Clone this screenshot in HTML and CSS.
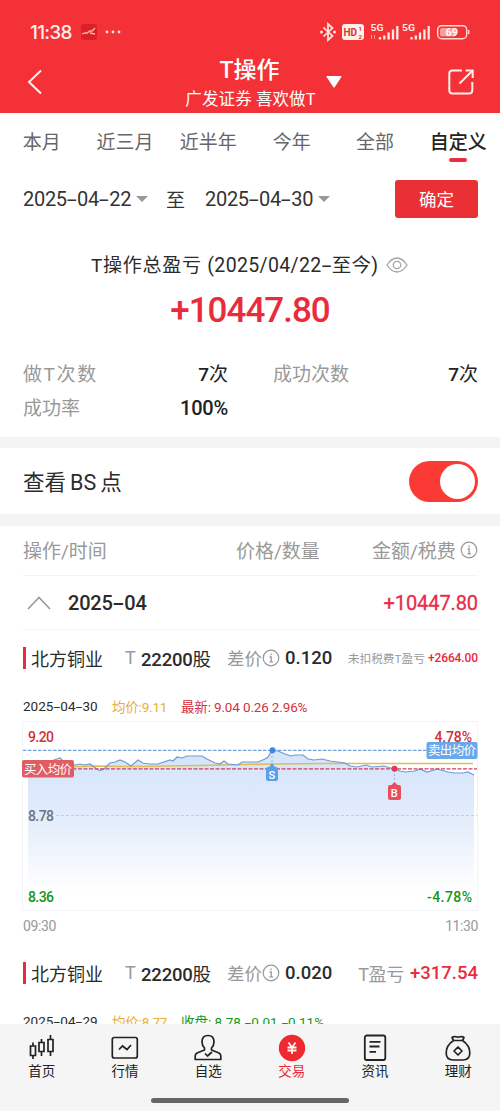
FILE: index.html
```html
<!DOCTYPE html>
<html lang="zh-CN">
<head>
<meta charset="utf-8">
<title>T操作</title>
<link rel="stylesheet" href="styles.css">
</head>
<body>
<svg class="defs" width="0" height="0">
  <symbol id="info" viewBox="0 0 18 18"><circle cx="9" cy="9" r="7.8" fill="none" stroke="#999" stroke-width="1.2"/><path d="M9 4.4v1.8M7.6 8H9.2v4.8M7.4 12.9h3.6" fill="none" stroke="#999" stroke-width="1.3"/></symbol>
</svg>
<header class="header">
  <div class="status">
    <span class="clock">11:38</span>
    <svg class="app" width="16" height="16" viewBox="0 0 16 16"><rect width="16" height="16" rx="3" fill="#dc1f2b"/><path d="M1 10l3-1 2 0 3-2 2 0 3-3M9 9l5 1" fill="none" stroke="#ffb8a8" stroke-width="1.3"/></svg>
    <svg class="dots" width="16" height="4" viewBox="0 0 16 4" fill="#ffe5e0"><circle cx="2" cy="2" r="1.4"/><circle cx="8" cy="2" r="1.4"/><circle cx="14" cy="2" r="1.4"/></svg>
    <svg class="signals" width="152" height="22" viewBox="318 21 152 22">
      <path d="M323.500 27.500l9 8.500-4.500 4V24l4.500 4-9 8.500" fill="none" stroke="#ffe9e4" stroke-width="1.700"/>
      <circle cx="321.500" cy="32" r="1.500" fill="#ffe9e4"/><circle cx="334.500" cy="32" r="1.500" fill="#ffe9e4"/>
      <rect x="342" y="24" width="22" height="16" rx="3" fill="#fff0ec"/>
      <text x="343.500" y="36" class="hd" textLength="13.500">HD</text>
      <text x="358.500" y="31.300" class="tiny">1</text><text x="358.500" y="38.600" class="tiny">2</text>
      <text x="370.500" y="31" class="g5" textLength="13" lengthAdjust="spacingAndGlyphs">5G</text>
      <text x="402" y="31" class="g5" textLength="13" lengthAdjust="spacingAndGlyphs">5G</text>
      <path d="M371.500 35v4M374.500 35v4" stroke="#ff9c96" stroke-width="1"/>
      <path d="M380 37v2.500M384.300 35.500v4M388.600 32.500v7M393 29.500v10M397.300 26v13.500M411.500 37v2.500M415.800 35.500v4M420 32.500v7M424.400 29.500v10M428.700 26v13.500" stroke="#ffe9e4" stroke-width="2.300"/>
      <rect x="437.700" y="25.700" width="29" height="13" rx="4" fill="none" stroke="#ffd9d4" stroke-width="1.500"/>
      <rect x="440" y="28" width="16" height="8.500" rx="2" fill="#ff9993"/>
      <path d="M468.700 30v4" stroke="#ffd9d4" stroke-width="1.500"/>
      <text x="445.500" y="36" class="batt" textLength="12.500">69</text>
    </svg>
  </div>
  <div class="titlebar">
    <svg class="back" width="16" height="26" viewBox="0 0 16 26"><path d="M14 1.500L2 13l12 11.500" fill="none" stroke="#fff0ed" stroke-width="2"/></svg>
    <div class="titles"><h1>T操作</h1><p>广发证券 喜欢做T</p></div>
    <svg class="caret" width="16" height="12" viewBox="0 0 16 12"><path d="M1 0h14q1 0 .4 1L8.800 11q-.8 1-1.600 0L.6 1Q0 0 1 0z" fill="#fff"/></svg>
    <svg class="share" width="26" height="26" viewBox="0 0 26 26"><path d="M14 1.500H4.500Q1.300 1.500 1.300 4.700v16.600q0 3.200 3.200 3.200h16.600q3.200 0 3.200-3.200V13M17.500 1.500h7.200V9M24.200 2L11.500 14.500" fill="none" stroke="#fff0ed" stroke-width="2"/></svg>
  </div>
</header>

<nav class="tabs">
  <span>本月</span><span>近三月</span><span>近半年</span><span>今年</span><span>全部</span><span class="on">自定义</span>
</nav>

<section class="dates">
  <span class="date">2025<i class="h">-</i>04<i class="h">-</i>22</span><i class="tri"></i>
  <span class="to">至</span>
  <span class="date">2025<i class="h">-</i>04<i class="h">-</i>30</span><i class="tri"></i>
  <button class="ok">确定</button>
</section>

<section class="summary">
  <div class="sumtitle"><span>T操作总盈亏 <span class="range">(2025/04/22<i class="h">-</i>至今)</span></span>
    <svg width="22" height="18" viewBox="0 0 22 18" fill="none" stroke="#a4a4a4" stroke-width="1.300"><path d="M1 9C4.500 3.600 7.500 2 11 2s6.500 1.600 10 7c-3.500 5.400-6.500 7-10 7S4.500 14.400 1 9z"/><circle cx="11" cy="9" r="3.700"/></svg>
  </div>
  <div class="total">+10447.80</div>
  <div class="stats">
    <span class="wide">做T次数</span><b>7<em>次</em></b><span>成功次数</span><b>7<em>次</em></b>
    <span>成功率</span><b class="pct">100%</b>
  </div>
</section>

<section class="toggle"><span>查看<em>BS</em>点</span><i class="switch"></i></section>

<section class="list">
  <div class="thead"><span>操作/时间</span><span>价格/数量</span><span class="last">金额/税费<svg width="18" height="18"><use href="#info"/></svg></span></div>
  <div class="month"><svg width="24" height="14" viewBox="0 0 24 14"><path d="M1 13L12 1.500 23 13" fill="none" stroke="#999" stroke-width="1.600"/></svg><b>2025<i class="h">-</i>04</b><strong>+10447.80</strong></div>

  <article>
    <div class="trade"><i class="mark"></i><span class="name">北方铜业</span><span class="t">T</span><span class="qty">22200<em>股</em></span><span class="diff">差价</span><svg width="18" height="18"><use href="#info"/></svg><span class="spread">0.120</span><span class="profit small"><em>未扣税费T盈亏</em><b>+2664.00</b></span></div>
    <div class="quote"><span class="qd">2025<i class="h">-</i>04<i class="h">-</i>30</span><span class="avg">均价:9.11</span><span class="up">最新: 9.04 0.26 2.96%</span></div>
    <svg class="chart" width="457" height="191" viewBox="22 721 457 191">
      <defs><linearGradient id="area" x1="0" y1="0" x2="0" y2="1"><stop offset="0" stop-color="#d3e4fb"/><stop offset=".5" stop-color="#e4edfb"/><stop offset="1" stop-color="#fff"/></linearGradient></defs>
      <path d="M22.500 911V721.500H477.500V910.500H22.500" fill="none" stroke="#f1f4f9"/>
      <path fill="url(#area)" d="M28 767l12-2 14-5 6-2 4 4 11 3 5-1 5 1 5-1 7 5 3 1.500 4-1.500 6-6 5-1 5-2 5 2 6 4 7-6 5 3 7 1h8l12-4 3 1 4-4 5 1 5-2h15l5 3 8 4 5 1 4-3 4 3 10 1 4-3h16l7-3 3-2 4-7 6 1 7 3 6 2 4-1h8l5 4 6 1 8-1 8 2 15 2 5 3 7 1 9-2 6 2 12-1 10 3 6 2 5 1 10-1 5-2 7 3 10-3 11 3 7 1h8l5-1 6 3V892H28z"/>
      <path d="M28 768L97 766 130 766.500 200 765.500 272 764 330 763.500H473" fill="none" stroke="#e3bd51" stroke-width="1.500"/>
      <path fill="none" stroke="#6f9bd2" stroke-width="1.200" d="M28 767l12-2 14-5 6-2 4 4 11 3 5-1 5 1 5-1 7 5 3 1.500 4-1.500 6-6 5-1 5-2 5 2 6 4 7-6 5 3 7 1h8l12-4 3 1 4-4 5 1 5-2h15l5 3 8 4 5 1 4-3 4 3 10 1 4-3h16l7-3 3-2 4-7 6 1 7 3 6 2 4-1h8l5 4 6 1 8-1 8 2 15 2 5 3 7 1 9-2 6 2 12-1 10 3 6 2 5 1 10-1 5-2 7 3 10-3 11 3 7 1h8l5-1 6 3"/>
      <path d="M23 750.300H477" stroke="#6fa4df" stroke-width="1.200" stroke-dasharray="3.500 1.500"/>
      <path d="M23 768.800H477" stroke="#cf3e63" stroke-width="1.300" stroke-dasharray="4 1.500"/>
      <path d="M56 815.500H477" stroke="#c3cddb" stroke-dasharray="3 2"/>
      <path d="M272 752v14M394.500 770v15" stroke="#9bb2d4" stroke-dasharray="2 2"/>
      <circle cx="272.500" cy="750.200" r="3" fill="#3f85de"/><circle cx="394.500" cy="768.800" r="3" fill="#e8375c"/>
      <path d="M272 763l3 4h1q2 0 2 2v10q0 2-2 2h-8q-2 0-2-2v-10q0-2 2-2h1z" fill="#5a9fe9"/>
      <path d="M394.500 782l3 3h1.500q2 0 2 2v11q0 2-2 2h-9q-2 0-2-2v-11q0-2 2-2h1.500z" fill="#e84e60"/>
      <text x="268.500" y="778.500" class="pin">S</text><text x="390.800" y="796.800" class="pin">B</text>
      <text x="28" y="742" class="axis red" textLength="26">9.20</text><text x="434.500" y="742" class="axis red" textLength="37.500">4.78%</text>
      <text x="28" y="821" class="axis slate" textLength="26">8.78</text>
      <text x="28" y="902" class="axis green" textLength="26">8.36</text><text x="427" y="902" class="axis green" textLength="45">-4.78%</text>
      <rect x="22" y="760" width="52" height="17.500" rx="2" fill="#e25c63"/><text x="24" y="773.500" class="label" textLength="48">买入均价</text>
      <rect x="426.500" y="742" width="51" height="17" rx="2" fill="#6aa8ec"/><text x="428" y="755.300" class="label" textLength="48">卖出均价</text>
    </svg>
    <div class="times"><span>09:30</span><span>11:30</span></div>
  </article>

  <article>
    <div class="trade"><i class="mark"></i><span class="name">北方铜业</span><span class="t">T</span><span class="qty">22200<em>股</em></span><span class="diff">差价</span><svg width="18" height="18"><use href="#info"/></svg><span class="spread">0.020</span><span class="profit"><em>T盈亏</em><b>+317.54</b></span></div>
    <div class="quote"><span class="qd">2025<i class="h">-</i>04<i class="h">-</i>29</span><span class="avg">均价:8.77</span><span class="down">收盘: 8.78 <i class="h">-</i>0.01 <i class="h">-</i>0.11%</span></div>
  </article>
</section>

<footer class="bottom">
  <div class="nav">
    <div><svg width="28" height="28" viewBox="0 0 28 28" fill="none" stroke="#222" stroke-width="1.700"><path d="M2.500 12h5v9.500h-5zM11 8.500h5v9h-5zM20 5.500h5v12h-5zM5 8.500V12M5 21.500v3.500M13.500 5v3.500M13.500 17.500v4.500M22.500 1v4.500M22.500 17.500v4.500"/></svg><span>首页</span></div>
    <div><svg width="28" height="28" viewBox="0 0 28 28" fill="none" stroke="#222" stroke-width="1.700"><rect x="1.300" y="3.500" width="25" height="20.500" rx="2"/><path d="M8 15.500l3.500-3.500 4.500 3.500 4-4.500"/></svg><span>行情</span></div>
    <div><svg width="28" height="28" viewBox="0 0 28 28" fill="none" stroke="#222" stroke-width="1.700" stroke-linejoin="round"><path d="M10.500 16v-2C8.800 12.300 8 10.300 8 8c0-4 2.300-6.500 6-6.500S20 4 20 8c0 2.300-.8 4.300-2.500 6v2l7.500 3c1.200.6 1.800 1.500 1.800 3v3.500H1.200V22c0-1.500.6-2.400 1.800-3z"/><path d="M11 19.500l2.500 2.500 4.500-4"/></svg><span>自选</span></div>
    <div class="active"><svg width="28" height="28" viewBox="0 0 28 28"><circle cx="14" cy="14" r="13.200" fill="#ee2932"/><path d="M10.500 8.500l3.500 5 3.500-5M14 13.500V20M9.500 13.500h9M9.500 16.500h9" fill="none" stroke="#fff1eb" stroke-width="1.800"/></svg><span>交易</span></div>
    <div><svg width="28" height="28" viewBox="0 0 28 28" fill="none" stroke="#222" stroke-width="1.800"><rect x="3.800" y="1.500" width="20.500" height="24.500" rx="2"/><path d="M8.500 7.800h11M8.500 12.500h10M8.500 17.800h6.500"/></svg><span>资讯</span></div>
    <div><svg width="28" height="28" viewBox="0 0 28 28" fill="none" stroke="#222" stroke-width="1.700" stroke-linejoin="round"><path d="M9.500 6.500L8 3.500c1.500-1.500 3-1 4-.7 1.500.5 2.500.5 4 0 1-.3 2.500-.8 4 .7l-1.500 3zM9.500 6.500C5 9.500 2.200 14.500 2.200 19c0 5 2.500 7 7 7h9.600c4.500 0 7-2 7-7 0-4.500-2.800-9.500-7.300-12.500M14 13l4 4-4 4-4-4z"/></svg><span>理财</span></div>
  </div>
  <i class="home"></i>
</footer>
</body>
</html>
```
FILE: styles.css
```css
* { box-sizing: border-box; }
body {
  margin: 0; width: 500px; height: 1111px; overflow: hidden;
  display: flex; flex-direction: column; background: #fff; color: #2b2b2b;
  font-family: Roboto, "Noto Sans CJK SC", sans-serif; font-size: 19px; white-space: nowrap;
}
svg { display: block; flex: none; }
i, em { font-style: normal; }
.defs { position: absolute; }
/* wide figure dash */
.h { display: inline-block; transform: scaleX(1.8); margin: 0 .12em; letter-spacing: 0; }

.header { height: 113px; flex: none; background: #f33136; color: #fff; padding-top: 21px; }
.status { height: 22px; display: flex; align-items: center; padding-left: 30px; }
.clock { font-size: 19px; width: 42px; letter-spacing: -.75px; font-family: Inter, sans-serif; font-weight: 500; color: #ffece8; }
.app { margin-left: 9px; }
.dots { margin-left: 8px; }
.signals { margin-left: 197px; }
.hd { font: 700 10px Roboto; fill: #d93438; }
.tiny { font: 700 6px Roboto; fill: #d93438; }
.g5 { font: 700 9.5px Roboto; fill: #ffe9e4; }
.batt { font: 700 11px Roboto; fill: #fff; }
.titlebar { height: 70px; display: grid; grid-template-columns: 27px 158px 131px 10px 16px 106px 26px; align-items: center; }
.back { grid-column: 2; margin-top: 7px; }
.titles { text-align: center; padding-top: 12px; display: flex; flex-direction: column; align-items: center; }
.titles h1 { margin: 0; font-size: 23px; line-height: 30px; font-weight: 500; position: relative; left: -1px; }
.titles p { margin: 0; font-size: 16.5px; line-height: 27px; letter-spacing: .1px; }
.caret { grid-column: 5; margin-top: 7px; }
.share { grid-column: 7; margin-top: 7px; }

.tabs { height: 56px; padding-top: 2px; display: grid; grid-template-columns: repeat(6, 1fr); text-align: center; line-height: 54px; color: #666; flex: none; }
.tabs span { height: 54px; padding-top: 1px; }
.tabs .on { color: #222; font-weight: 500; display: flex; flex-direction: column; align-items: center; }
.on::after { content: ""; width: 18px; height: 4px; border-radius: 2px; background: #ea2b40; margin-top: -12px; flex: none; }

.dates { height: 60px; flex: none; padding: 0 22px 0 23px; display: flex; align-items: center; color: #333; }
.date { font-size: 20px; letter-spacing: -.3px; width: 113px; }
.tri { border: 6px solid transparent; border-top: 6px solid #999; border-bottom: 0; }
.to { margin: -2px 19px 0 18px; width: 20px; }
.ok { margin-left: auto; width: 83px; height: 38px; padding: 0 0 2px; border: 0; border-radius: 3px; background: #ea3034; color: #fff; font: 17.5px "Noto Sans CJK SC", sans-serif; }

.summary { height: 208px; flex: none; padding-top: 21px; }
.sumtitle { display: flex; align-items: center; height: 30px; padding-left: 91px; letter-spacing: .75px; }
.sumtitle > span { width: 295px; height: 30px; line-height: 31px; }
.range { font-size: 19.5px; letter-spacing: .35px; }
.total { height: 62px; line-height: 62px; text-align: center; color: #e92b3c; font-size: 35px; font-weight: 500; letter-spacing: -1px; }
.stats { margin-top: 16px; padding: 0 22px 0 23px; display: grid; grid-template-columns: 105px 100px 45px 105px 100px; grid-auto-rows: 34px; line-height: 33px; color: #999; }
.stats span:nth-of-type(2) { grid-column: 4; }
.stats span:nth-of-type(3) { grid-column: 1; }
.stats .wide { letter-spacing: 1.6px; }
.stats b { text-align: right; color: #222; font-weight: 500; }
.stats em, .qty em { font-weight: 400; }
.stats .pct { font-size: 20px; letter-spacing: -.2px; }

.toggle { height: 89px; flex: none; border: solid #f4f4f4; border-width: 11px 0 12px; padding: 0 22px 0 23px; display: flex; align-items: center; justify-content: space-between; font-size: 21.5px; }
.toggle span { padding-bottom: 2px; }
.toggle em { margin: 0 4px; }
.switch { width: 69px; height: 41px; border-radius: 21px; background: #fb3a35; padding: 3px; display: flex; justify-content: flex-end; }
.switch::after { content: ""; width: 35px; height: 35px; border-radius: 50%; background: #fff; }

.list { height: 498px; flex: none; overflow: hidden; padding: 0 22px 0 23px; }
.thead { height: 50px; padding-bottom: 2px; display: grid; grid-template-columns: 213px 136px 106px; align-items: center; color: #999; border-bottom: 1px solid #f3f3f3; }
.last { display: flex; justify-content: space-between; align-items: center; }
.month { height: 54px; border-bottom: 1px solid #f5f5f5; display: flex; align-items: center; padding-left: 4px; font-size: 20px; }
.month b { margin-left: 17px; font-weight: 500; letter-spacing: -.2px; }
.month strong { margin-left: auto; color: #e92b4a; font-weight: 400; letter-spacing: -.1px; -webkit-text-stroke: .3px; }
.trade { height: 56px; padding-bottom: 1px; display: flex; align-items: center; font-size: 18px; }
.mark { width: 3px; height: 22px; background: #e92b40; margin-right: 5px; }
.name { width: 94px; }
.t { width: 16px; color: #999; }
.qty { width: 86px; font-size: 18.5px; letter-spacing: -.2px; font-weight: 500; color: #2b2b2b; }
.diff { width: 35px; font-size: 17.5px; color: #999; }
.spread { margin-left: 5px; font-size: 18.5px; font-weight: 500; }
.profit { margin-left: auto; display: flex; align-items: center; }
.profit em { font-size: 18px; letter-spacing: -.3px; color: #999; margin-right: 6px; }
.profit b { font-size: 18.5px; color: #e92b40; font-weight: 500; }
.small em { font-size: 11.7px; letter-spacing: 0; margin-right: 3px; }
.small b { font-size: 12px; letter-spacing: -.1px; }
.quote { height: 41px; padding-bottom: 2px; display: flex; align-items: center; font-size: 13.5px; }
.qd { width: 89px; }
.avg { width: 69px; color: #e9ae37; letter-spacing: -.2px; }
.up { color: #d9303a; letter-spacing: -.15px; }
.down { color: #129718; }
.chart { margin: -6px 0 0 -1px; }
.times { height: 33px; padding-bottom: 5px; display: flex; justify-content: space-between; align-items: center; font-size: 14px; color: #999; letter-spacing: -.4px; }
.axis { font: 500 14px Roboto; }
.red { fill: #d0303c; }
.slate { fill: #6c7484; }
.green { fill: #119718; }
.label { font: 12.5px "Noto Sans CJK SC"; fill: #fff; }
.pin { font: 500 11px Roboto; fill: #fff; }

.bottom { height: 87px; flex: none; background: #f5f5f5; padding-top: 10px; display: flex; flex-direction: column; align-items: center; }
.nav { width: 500px; display: grid; grid-template-columns: repeat(6, 1fr); }
.nav div { display: flex; flex-direction: column; align-items: center; font-size: 13.5px; line-height: 18px; color: #222; }
.nav .active { color: #e92b38; }
.home { width: 198px; height: 5px; border-radius: 3px; background: #666; margin-top: 18px; }
```
